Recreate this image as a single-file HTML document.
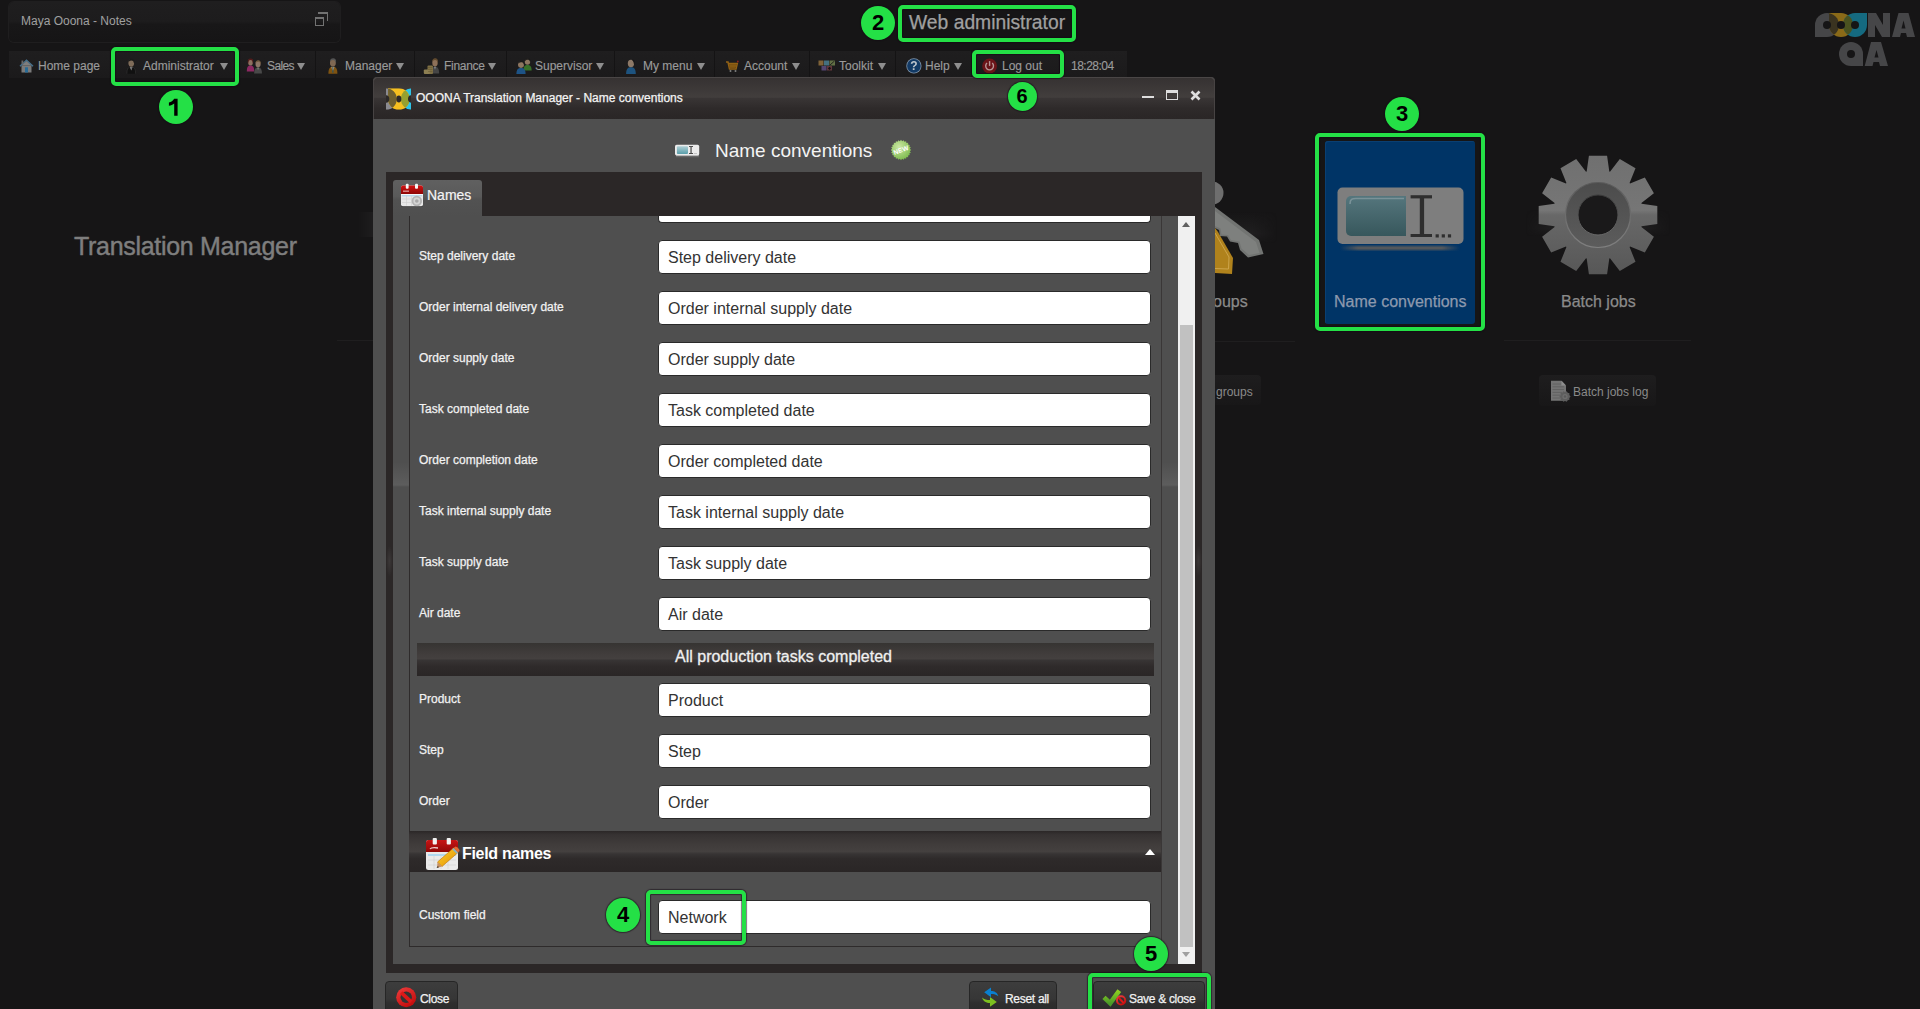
<!DOCTYPE html>
<html><head><meta charset="utf-8">
<style>
*{margin:0;padding:0;box-sizing:border-box}
html,body{width:1920px;height:1009px;overflow:hidden;background:#161516;font-family:"Liberation Sans",sans-serif;position:relative}
.a{position:absolute}
.t{position:absolute;white-space:nowrap;line-height:1}
svg{position:absolute;overflow:visible}
.sep{position:absolute;top:51px;width:1px;height:27px;background:#141314}
.nt{position:absolute;top:60px;font-size:12px;color:#9a9a9a;-webkit-text-stroke:0.15px #9a9a9a;white-space:nowrap;line-height:13px}
.tri{position:absolute;top:63px;width:0;height:0;border-left:4px solid transparent;border-right:4px solid transparent;border-top:7px solid #8e8e8e}
.gbox{position:absolute;border:4px solid #24e046;border-radius:5px;box-shadow:0 0 1px 1px rgba(20,10,20,0.55),inset 0 0 1px 1px rgba(20,10,20,0.55)}
.gc{position:absolute;width:34px;height:34px;border-radius:50%;background:#24e046;color:#000;font-weight:bold;font-size:22px;text-align:center;line-height:34px;box-shadow:0 0 1px 1px rgba(20,10,20,0.55)}
.lbl{position:absolute;font-size:12px;color:#f2f2f2;white-space:nowrap;line-height:13px;-webkit-text-stroke:0.25px #f2f2f2}
.inp{position:absolute;width:493px;height:34px;background:#fff;border-radius:4px;border:1px solid #2a2a2a}
.inp span{position:absolute;left:9px;top:8px;font-size:16px;color:#333;line-height:17px;white-space:nowrap}
.btn{position:absolute;height:40px;background:linear-gradient(#3d3d3d,#363636 45%,#2e2e2e 55%,#282828);border-radius:4px;border:1px solid #262626}
.btn span{position:absolute;top:11px;font-size:12px;color:#f2f2f2;-webkit-text-stroke:0.25px #f2f2f2;white-space:nowrap;line-height:13px;letter-spacing:-0.3px}
</style></head><body>
<div class="a" style="left:9px;top:2px;width:331px;height:40px;background:linear-gradient(#1f1e1f 0%,#1d1c1d 48%,#181718 56%,#161516 100%);border-radius:5px;box-shadow:0 0 0 1px #1f1e1f"></div>
<div class="t" style="left:21px;top:15px;font-size:12px;color:#a0a0a0">Maya Ooona - Notes</div>
<div class="a" style="left:318px;top:12px;width:10px;height:9px;border-top:2px solid #727272;border-right:1.5px solid #727272"></div>
<div class="a" style="left:315px;top:17px;width:9px;height:9px;border:1.5px solid #727272;border-top-width:2.5px"></div>
<div class="a" style="left:9px;top:51px;width:1118px;height:27px;background:linear-gradient(#1f1e1f,#1b1a1b)"></div>
<div class="nt" style="left:38px">Home page</div>
<div class="nt" style="left:143px">Administrator</div>
<div class="tri" style="left:220px"></div>
<div class="nt" style="left:267px;letter-spacing:-0.6px">Sales</div>
<div class="tri" style="left:297px"></div>
<div class="nt" style="left:345px">Manager</div>
<div class="tri" style="left:396px"></div>
<div class="nt" style="left:444px;letter-spacing:-0.3px">Finance</div>
<div class="tri" style="left:488px"></div>
<div class="nt" style="left:535px">Supervisor</div>
<div class="tri" style="left:596px"></div>
<div class="nt" style="left:643px">My menu</div>
<div class="tri" style="left:697px"></div>
<div class="nt" style="left:744px">Account</div>
<div class="tri" style="left:792px"></div>
<div class="nt" style="left:839px">Toolkit</div>
<div class="tri" style="left:878px"></div>
<div class="nt" style="left:925px">Help</div>
<div class="tri" style="left:954px"></div>
<div class="nt" style="left:1002px">Log out</div>
<div class="nt" style="left:1071px;letter-spacing:-0.5px">18:28:04</div>
<div class="sep" style="left:110px"></div>
<div class="sep" style="left:239px"></div>
<div class="sep" style="left:315px"></div>
<div class="sep" style="left:414px"></div>
<div class="sep" style="left:506px"></div>
<div class="sep" style="left:614px"></div>
<div class="sep" style="left:714px"></div>
<div class="sep" style="left:809px"></div>
<div class="sep" style="left:895px"></div>
<div class="sep" style="left:971px"></div>
<div class="sep" style="left:1059px"></div>
<div class="a" style="left:0;top:0;opacity:0.9"><svg style="left:0;top:0" width="1000" height="80" viewBox="0 0 1000 80"><g transform="translate(19,59)"><rect x="2.5" y="6.5" width="10" height="7" fill="#858585"/><path d="M1 7.2 L7.5 1.2 L14 7.2" fill="none" stroke="#4a7a9a" stroke-width="1.5"/><path d="M2.6 6.5 L7.5 2 L12.4 6.5Z" fill="#8a8a8a"/><rect x="2.5" y="1.5" width="1.8" height="3.5" fill="#707070"/><rect x="6" y="8.3" width="3" height="5.2" fill="#2a74a4"/></g><g transform="translate(126.5,58.5) scale(0.95,0.95)"><path d="M0.4 16 C0.4 10.8 2 8.9 5 8.9 C8 8.9 9.6 10.8 9.6 16Z" fill="#101010"/><path d="M3.6 9 L6.4 9 L5 12.5Z" fill="#b8b8b8"/><path d="M4.7 9.6 L5.3 9.6 L5.1 13Z" fill="#333"/><path d="M0.4 16 C0.4 10.8 2 8.9 5 8.9 C8 8.9 9.6 10.8 9.6 16" fill="none" stroke="#3a3a3a" stroke-width="0.6"/><ellipse cx="5" cy="4.8" rx="3" ry="3.9" fill="#8a7560"/><path d="M2.1 4.2 C1.8 1.2 3.5 0.3 5.2 0.3 C7.3 0.3 8.6 1.6 8.2 5 L7.6 4.4 C7.5 2.8 6.6 2.1 5 2.1 C3.6 2.1 2.6 3 2.1 4.2Z" fill="#1a1a1a"/></g><g transform="translate(246.5,58.3) scale(0.8,0.82)"><path d="M0.4 16 C0.4 10.8 2 8.9 5 8.9 C8 8.9 9.6 10.8 9.6 16Z" fill="#9a2a6a"/><ellipse cx="5" cy="4.8" rx="3" ry="3.9" fill="#9a7a68"/><path d="M1.8 6.5 C1 1.5 3 0.2 5 0.2 C7.5 0.2 9 1.5 8.2 6.5 L7.6 5 C7.6 3 6.5 2 5 2 C3.5 2 2.5 3 2.4 5Z" fill="#5a1a1a"/></g><g transform="translate(253.8,60) scale(0.85,0.85)"><path d="M0.4 16 C0.4 10.8 2 8.9 5 8.9 C8 8.9 9.6 10.8 9.6 16Z" fill="#4e4e4e"/><path d="M4 9 L6 9 L5 12Z" fill="#8a9a8a"/><ellipse cx="5" cy="4.8" rx="3" ry="3.9" fill="#9a8070"/><path d="M2.1 4.2 C1.8 1.2 3.5 0.3 5.2 0.3 C7.3 0.3 8.6 1.6 8.2 5 L7.6 4.4 C7.5 2.8 6.6 2.1 5 2.1 C3.6 2.1 2.6 3 2.1 4.2Z" fill="#7a6040"/></g><g transform="translate(328,58) scale(0.98,0.98)"><path d="M0.4 16 C0.4 10.8 2 8.9 5 8.9 C8 8.9 9.6 10.8 9.6 16Z" fill="#8a5a10"/><rect x="4.5" y="9" width="1" height="6" fill="#1a5a7a"/><path d="M3.5 9 L4.4 9 L4.4 13Z M5.6 9 L6.5 9 L5.6 13Z" fill="#c8c8c8"/><ellipse cx="5" cy="4.8" rx="3" ry="3.9" fill="#8a7058"/><path d="M2.1 4.2 C1.8 1.2 3.5 0.3 5.2 0.3 C7.3 0.3 8.6 1.6 8.2 5 L7.6 4.4 C7.5 2.8 6.6 2.1 5 2.1 C3.6 2.1 2.6 3 2.1 4.2Z" fill="#5a5a5a"/></g><g transform="translate(430.5,58) scale(0.9,0.97)"><path d="M0.4 16 C0.4 10.8 2 8.9 5 8.9 C8 8.9 9.6 10.8 9.6 16Z" fill="#4a4a4a"/><path d="M4 9 L6 9 L5 12Z" fill="#9aa0a8"/><ellipse cx="5" cy="4.8" rx="3" ry="3.9" fill="#9a7a60"/><path d="M2.1 4.2 C1.8 1.2 3.5 0.3 5.2 0.3 C7.3 0.3 8.6 1.6 8.2 5 L7.6 4.4 C7.5 2.8 6.6 2.1 5 2.1 C3.6 2.1 2.6 3 2.1 4.2Z" fill="#6a5030"/></g><g transform="translate(423.5,65.5)"><rect x="4" y="0" width="5.5" height="8.5" rx="1" fill="#8a7a4a"/><rect x="0.3" y="4" width="6" height="4.5" rx="1" fill="#9a8a58"/><path d="M4.5 2 H9 M4.5 4 H9 M4.5 6 H9" stroke="#6a5a30" stroke-width="0.5"/></g><g transform="translate(523,58) scale(0.9,0.78)"><path d="M0.4 16 C0.4 10.8 2 8.9 5 8.9 C8 8.9 9.6 10.8 9.6 16Z" fill="#3a7a2a"/><ellipse cx="5" cy="4.8" rx="3" ry="3.9" fill="#9a8068"/><path d="M2.1 4.2 C1.8 1.2 3.5 0.3 5.2 0.3 C7.3 0.3 8.6 1.6 8.2 5 L7.6 4.4 C7.5 2.8 6.6 2.1 5 2.1 C3.6 2.1 2.6 3 2.1 4.2Z" fill="#1a1a1a"/></g><g transform="translate(516,60.5) scale(1.0,0.85)"><path d="M0.4 16 C0.4 10.8 2 8.9 5 8.9 C8 8.9 9.6 10.8 9.6 16Z" fill="#1e5a92"/><ellipse cx="5" cy="4.8" rx="3" ry="3.9" fill="#9a8068"/><path d="M2.1 4.2 C1.8 1.2 3.5 0.3 5.2 0.3 C7.3 0.3 8.6 1.6 8.2 5 L7.6 4.4 C7.5 2.8 6.6 2.1 5 2.1 C3.6 2.1 2.6 3 2.1 4.2Z" fill="#1a1a1a"/></g><g transform="translate(625.7,59) scale(1.05,0.94)"><path d="M0.4 16 C0.4 10.8 2 8.9 5 8.9 C8 8.9 9.6 10.8 9.6 16Z" fill="#1e5a8a"/><ellipse cx="5" cy="4.8" rx="3" ry="3.9" fill="#9a8470"/><path d="M6 1 C7.5 0.3 8.8 1.5 8.4 5.5 L7.7 5 C7.6 3 7 1.8 6 1Z" fill="#141414"/></g><g transform="translate(725.5,60.5)"><path d="M0.5 1.5 H2.5 L4 8.5 H10.5 L11.8 3 H3" fill="none" stroke="#a06a14" stroke-width="1.5"/><path d="M3.3 3.6 H11.2 L10.1 7.8 H4.2Z" fill="#8a5a10"/><path d="M4 5.5 H11" stroke="#a06a14" stroke-width="0.8"/><circle cx="5" cy="10.5" r="1" fill="#8a8a8a"/><circle cx="10" cy="10.5" r="1" fill="#8a8a8a"/><circle cx="12.3" cy="1" r="0.9" fill="#a02020"/></g><g transform="translate(818.5,60.5)"><rect x="0" y="0" width="5" height="5" fill="#8a6a3a"/><rect x="5.5" y="0" width="5" height="5" fill="#4a7a8a"/><rect x="11" y="0" width="5.5" height="5" fill="#6a7a4a"/><path d="M11.5 4.5 L16 0.5" stroke="#1a1a1a" stroke-width="0.9"/><rect x="3" y="5.5" width="5" height="4.5" fill="#5a4a7a"/><rect x="8.5" y="5.5" width="5" height="4.5" fill="#6a3a40"/><path d="M11 6.2 L12.6 7.8 L11 9.4 L9.4 7.8Z" fill="#111"/></g><g transform="translate(906,58)"><circle cx="7.9" cy="7.9" r="7.6" fill="#8aa0b8"/><circle cx="7.9" cy="7.9" r="6.8" fill="#123e6e"/><text x="7.9" y="12.3" text-anchor="middle" font-family="Liberation Sans" font-weight="bold" font-size="12" fill="#d0d8e0">?</text></g><g transform="translate(982,58.5)"><circle cx="7.6" cy="7.4" r="7.4" fill="#741418"/><path d="M5 4.6 A3.9 3.9 0 1 0 10.2 4.6" fill="none" stroke="#c8a4a4" stroke-width="1.4"/><path d="M7.6 2.6 L7.6 7.4" stroke="#c8a4a4" stroke-width="1.4"/></g></svg></div>
<div class="t" style="left:909px;top:13px;font-size:19.3px;color:#a0a0a0;-webkit-text-stroke:0.25px #a0a0a0">Web administrator</div>
<div class="t" style="left:74px;top:234px;font-size:25px;letter-spacing:-0.3px;color:#7e7e7e;-webkit-text-stroke:0.45px #7e7e7e">Translation Manager</div>

<svg style="left:1815px;top:13px" width="101" height="54" viewBox="0 0 101 54">
<defs>
<clipPath id="c1"><path d="M0 12 A12 12 0 0 1 24 12 A12 12 0 0 1 12 24 H0Z"/></clipPath>
<clipPath id="c3"><path d="M40 0 H52 V12 A12 12 0 0 1 40 24 A12 12 0 0 1 40 0Z"/></clipPath>
</defs>
<path d="M0 12 A12 12 0 0 1 24 12 A12 12 0 0 1 12 24 H0Z" fill="#464648"/>
<path d="M14 0 H26 A12 12 0 0 1 26 24 A12 12 0 0 1 14 12Z" fill="#8a6a18"/>
<path d="M40 0 H52 V12 A12 12 0 0 1 40 24 A12 12 0 0 1 40 0Z" fill="#156a80"/>
<path d="M14 0 H26 A12 12 0 0 1 26 24 A12 12 0 0 1 14 12Z" fill="#3a3320" clip-path="url(#c1)"/>
<path d="M14 0 H26 A12 12 0 0 1 26 24 A12 12 0 0 1 14 12Z" fill="#4a5220" clip-path="url(#c3)"/>
<circle cx="12" cy="12" r="4" fill="#161516"/><circle cx="26" cy="12" r="4" fill="#161516"/><circle cx="40" cy="12" r="4" fill="#161516"/>
<path d="M53 0 H61 L68 12 V0 H75 V24 H67 L60 12 V24 H53Z" fill="#464648"/>
<path d="M77 24 L83.5 0 H93.5 L100 24 H92 L91 20 H86 L85 24Z M86.5 15.5 H90.5 L88.5 7.5Z" fill="#464648" fill-rule="evenodd"/>
<path d="M24 41 A12 12 0 0 1 48 41 V53 H36 A12 12 0 0 1 24 41Z" fill="#464648"/>
<circle cx="36" cy="41" r="4" fill="#161516"/>
<path d="M49.7 53 L56 29 H66 L73 53 H65 L64 49 H58.5 L57.5 53Z M59.5 44.5 H63.5 L61.5 37Z" fill="#464648" fill-rule="evenodd"/>
</svg>

<div class="a" style="left:358px;top:212px;width:16px;height:25px;background:linear-gradient(90deg,#161516,#1e1d1e)"></div>
<div class="a" style="left:1215px;top:212px;width:62px;height:31px;background:linear-gradient(rgba(40,39,40,0),rgba(40,39,40,0.55) 70%,rgba(40,39,40,0.2) 90%,rgba(40,39,40,0));-webkit-mask-image:linear-gradient(90deg,#000 60%,transparent)"></div>
<div class="a" style="left:1526px;top:210px;width:144px;height:26px;background:linear-gradient(rgba(40,39,40,0),rgba(40,39,40,0.55) 70%,rgba(40,39,40,0.2) 90%,rgba(40,39,40,0));-webkit-mask-image:linear-gradient(90deg,transparent,#000 20%,#000 80%,transparent)"></div>
<div class="a" style="left:337px;top:340px;width:36px;height:1px;background:#1f1e1f"></div>
<div class="a" style="left:1215px;top:341px;width:80px;height:1px;background:#1f1e1f"></div>
<div class="a" style="left:1504px;top:340px;width:187px;height:1px;background:#1f1e1f"></div>

<svg style="left:1215px;top:170px" width="60" height="110" viewBox="0 0 60 110">
<path d="M0 58 L3 62 L18 88 L17 104 L0 103Z" fill="#b0821c"/>
<path d="M0 63 L14 87 L13.5 99 L0 98.5" fill="none" stroke="#d0a850" stroke-width="0.9"/>
<circle cx="-3" cy="23" r="11.5" fill="#6e6e6e"/>
<path d="M0 37 L44 70 L48.5 84 L33 87.5 L25 80 L23 73 L15 71.5 L12 66.5 L5 66 L4 60 L0 58Z" fill="#727472"/>
<path d="M0 41 L41 72 L44.5 83 L34 85 L26.5 78.5 L24.5 71.5 L16 70 L13 65 L6.5 64.5 L5.5 58.5 L0 56Z" fill="#7e807e"/>
</svg>

<div class="t" style="left:1213px;top:294px;font-size:16px;color:#8a8a8a;-webkit-text-stroke:0.25px #8a8a8a">oups</div>
<div class="a" style="left:1200px;top:375px;width:61px;height:30px;background:linear-gradient(#1e1d1e,#1b1a1b 50%,#181718);border-radius:4px"></div>
<div class="t" style="left:1216px;top:386px;font-size:12px;color:#8a8a8a">groups</div>
<div class="a" style="left:1325px;top:141px;width:150px;height:183px;background:#003466;border-radius:3px;box-shadow:inset 1px 1px 0 #0a3f72"></div>

<svg style="left:1325px;top:175px" width="150" height="80" viewBox="0 0 150 80">
<defs><linearGradient id="tg" x1="0" y1="0" x2="0" y2="1"><stop offset="0" stop-color="#55767d"/><stop offset="1" stop-color="#37575c"/></linearGradient>
<linearGradient id="shl" x1="0" y1="0" x2="1" y2="0"><stop offset="0" stop-color="#5a5a5a" stop-opacity="0"/><stop offset="0.15" stop-color="#5a5a5a"/><stop offset="0.85" stop-color="#5a5a5a"/><stop offset="1" stop-color="#5a5a5a" stop-opacity="0"/></linearGradient></defs>
<filter id="bl"><feGaussianBlur stdDeviation="1"/></filter><rect x="15" y="71" width="120" height="4" fill="url(#shl)" filter="url(#bl)"/>
<rect x="12.5" y="12.5" width="126" height="56.5" rx="5" fill="#7e7e7e"/>
<path d="M26 21 H81 V61 H26 A5 5 0 0 1 21 56 V26 A5 5 0 0 1 26 21Z" fill="url(#tg)"/>
<path d="M25 29 C25 24 27 23.5 31 23.5 H79" stroke="#7a9298" stroke-width="1.6" fill="none"/>
<rect x="85.6" y="20.2" width="21.4" height="3.2" fill="#2e2e2e"/>
<rect x="94.8" y="22" width="4.3" height="40" fill="#2e2e2e"/>
<rect x="85.6" y="59" width="21.4" height="3" fill="#2e2e2e"/>
<rect x="110.6" y="59.3" width="3.2" height="3.2" fill="#2e2e2e"/>
<rect x="116.7" y="59.3" width="3.2" height="3.2" fill="#2e2e2e"/>
<rect x="122.9" y="59.3" width="3.2" height="3.2" fill="#2e2e2e"/>
</svg>

<div class="t" style="left:1334px;top:294px;font-size:16px;color:#8d99ae;-webkit-text-stroke:0.25px #8d99ae">Name conventions</div>
<svg style="left:1538px;top:155px" width="120" height="120" viewBox="0 0 120 120">
<defs><linearGradient id="gg" x1="0" y1="0" x2="0" y2="1"><stop offset="0" stop-color="#707070"/><stop offset="0.46" stop-color="#767676"/><stop offset="0.5" stop-color="#686868"/><stop offset="1" stop-color="#575757"/></linearGradient>
<linearGradient id="rg" x1="0" y1="0" x2="0" y2="1"><stop offset="0" stop-color="#4c4c4c"/><stop offset="1" stop-color="#5c5c5c"/></linearGradient>
<linearGradient id="rs" x1="0" y1="0" x2="0" y2="1"><stop offset="0" stop-color="#5a5a5a"/><stop offset="1" stop-color="#808080"/></linearGradient>
<linearGradient id="hs2" x1="0" y1="0" x2="0" y2="1"><stop offset="0" stop-color="#3a3a3a"/><stop offset="1" stop-color="#6a6a6a"/></linearGradient></defs>
<path d="M48.69,16.44 L50.92,0.69 L69.08,0.69 L71.31,16.44 L71.99,16.63 L81.80,4.10 L97.51,13.17 L91.57,27.93 L92.07,28.43 L106.83,22.49 L115.90,38.20 L103.37,48.01 L103.56,48.69 L119.31,50.92 L119.31,69.08 L103.56,71.31 L103.37,71.99 L115.90,81.80 L106.83,97.51 L92.07,91.57 L91.57,92.07 L97.51,106.83 L81.80,115.90 L71.99,103.37 L71.31,103.56 L69.08,119.31 L50.92,119.31 L48.69,103.56 L48.01,103.37 L38.20,115.90 L22.49,106.83 L28.43,92.07 L27.93,91.57 L13.17,97.51 L4.10,81.80 L16.63,71.99 L16.44,71.31 L0.69,69.08 L0.69,50.92 L16.44,48.69 L16.63,48.01 L4.10,38.20 L13.17,22.49 L27.93,28.43 L28.43,27.93 L22.49,13.17 L38.20,4.10 L48.01,16.63Z" fill="url(#gg)"/>
<circle cx="60" cy="60" r="32.5" fill="url(#rg)" stroke="url(#rs)" stroke-width="1.2"/>
<circle cx="60" cy="60" r="20" fill="#1a191a" stroke="url(#hs2)" stroke-width="1"/>
</svg>
<div class="t" style="left:1561px;top:294px;font-size:16px;color:#8a8a8a;-webkit-text-stroke:0.25px #8a8a8a">Batch jobs</div>
<div class="a" style="left:1539px;top:375px;width:117px;height:31px;background:linear-gradient(#1e1d1e,#1b1a1b 50%,#181718);border-radius:4px"></div>
<svg style="left:1550px;top:380px" width="22" height="23" viewBox="0 0 22 23"><path d="M1 0.8 H11.5 L16 5.5 V20.8 H1Z" fill="#747474"/><path d="M11.5 0.8 L16 5.5 H11.5Z" fill="#8e8e8e"/><g stroke="#606060" stroke-width="0.9"><path d="M2.5 4 H11 M2.5 6.8 H14 M2.5 9.6 H14 M2.5 12.4 H12 M2.5 15.2 H10 M2.5 18 H10"/></g><polygon points="20.60,16.50 19.37,17.92 19.53,19.79 17.70,20.22 16.73,21.83 15.00,21.10 13.27,21.83 12.30,20.22 10.47,19.79 10.63,17.92 9.40,16.50 10.63,15.08 10.47,13.21 12.30,12.78 13.27,11.17 15.00,11.90 16.73,11.17 17.70,12.78 19.53,13.21 19.37,15.08" fill="#5e5e5e"/><circle cx="15" cy="16.5" r="2.6" fill="#6e6e6e"/><circle cx="15" cy="16.5" r="1.2" fill="#5a5a5a"/></svg>
<div class="t" style="left:1573px;top:386px;font-size:12px;color:#8a8a8a">Batch jobs log</div>
<div class="a" style="left:373px;top:77px;width:842px;height:940px;background:#4f4f4f;border-radius:4px 4px 0 0"></div>
<div class="a" style="left:373px;top:77px;width:842px;height:42px;border-radius:5px 5px 0 0;background:linear-gradient(#353131 0%,#423e3d 48%,#393535 51%,#2e2a2a 75%,#2a2626 100%);box-shadow:inset 0 1px 0 #4a4646,inset -1px 0 0 #474343,inset 1px 0 0 #474343"></div>
<svg style="left:386px;top:88px" width="25" height="22" viewBox="0 0 24.3 21">
<defs><clipPath id="lb"><rect x="0" y="0" width="24.3" height="21"/></clipPath><clipPath id="lc1"><path d="M-10.5 10.5 A10.5 10.5 0 0 1 0 0.0 A10.5 10.5 0 0 1 10.5 10.5 A10.5 10.5 0 0 1 0 21.0 H-10.5Z"/></clipPath><clipPath id="lc3"><path d="M25 0.0 H35.5 V10.5 A10.5 10.5 0 0 1 25 21.0 A10.5 10.5 0 0 1 14.5 10.5 A10.5 10.5 0 0 1 25 0.0Z"/></clipPath></defs>
<g clip-path="url(#lb)">
<path d="M-10.5 10.5 A10.5 10.5 0 0 1 0 0.0 A10.5 10.5 0 0 1 10.5 10.5 A10.5 10.5 0 0 1 0 21.0 H-10.5Z" fill="#8a8a90"/>
<path d="M25 0.0 H35.5 V10.5 A10.5 10.5 0 0 1 25 21.0 A10.5 10.5 0 0 1 14.5 10.5 A10.5 10.5 0 0 1 25 0.0Z" fill="#2ec4e8"/>
<path d="M2.0 0.0 H12.5 A10.5 10.5 0 0 1 23.0 10.5 A10.5 10.5 0 0 1 12.5 21.0 A10.5 10.5 0 0 1 2.0 10.5Z" fill="#f6c020"/>
<path d="M2.0 0.0 H12.5 A10.5 10.5 0 0 1 23.0 10.5 A10.5 10.5 0 0 1 12.5 21.0 A10.5 10.5 0 0 1 2.0 10.5Z" fill="#6e6030" clip-path="url(#lc1)"/>
<path d="M2.0 0.0 H12.5 A10.5 10.5 0 0 1 23.0 10.5 A10.5 10.5 0 0 1 12.5 21.0 A10.5 10.5 0 0 1 2.0 10.5Z" fill="#96a030" clip-path="url(#lc3)"/>
<ellipse cx="0" cy="10.5" rx="3.2" ry="3.6" fill="#2c2929"/>
<ellipse cx="12.5" cy="10.5" rx="2.4" ry="3.3" fill="#2c2929"/>
<ellipse cx="25" cy="10.5" rx="3.6" ry="3.6" fill="#2c2929"/>
</g></svg>
<div class="t" style="left:416px;top:92px;font-size:12px;color:#f4f4f4;-webkit-text-stroke:0.25px #f4f4f4">OOONA Translation Manager - Name conventions</div>
<div class="a" style="left:1142px;top:96px;width:12px;height:2px;background:#dedede"></div>
<div class="a" style="left:1166px;top:90px;width:12px;height:10px;border:1.5px solid #dedede;border-top-width:3px"></div>
<svg style="left:1190px;top:90px" width="11" height="11" viewBox="0 0 11 11"><path d="M1.5 1.5 L9.5 9.5 M9.5 1.5 L1.5 9.5" stroke="#dedede" stroke-width="2.6"/></svg>
<svg style="left:675px;top:144px" width="25" height="15" viewBox="0 0 25 15">
<defs><linearGradient id="hg" x1="0" y1="0" x2="0" y2="1"><stop offset="0" stop-color="#b0d0d6"/><stop offset="1" stop-color="#5a9eaa"/></linearGradient>
<linearGradient id="hs" x1="0" y1="0" x2="0" y2="1"><stop offset="0" stop-color="#9a9a9a"/><stop offset="1" stop-color="#4f4f4f" stop-opacity="0"/></linearGradient></defs>
<rect x="1" y="11" width="23" height="3.5" fill="url(#hs)"/>
<rect x="0" y="0.8" width="24.2" height="10.6" rx="1.6" fill="#ececec"/>
<rect x="1.9" y="2.2" width="11.1" height="7.7" rx="1" fill="url(#hg)"/>
<rect x="14" y="2" width="4" height="0.9" fill="#3a3a3a"/><rect x="15.4" y="2.4" width="1.3" height="7" fill="#555"/><rect x="14" y="9" width="4" height="0.9" fill="#3a3a3a"/>
<rect x="18.8" y="9.2" width="3.2" height="0.6" fill="#aaa"/>
</svg>
<div class="t" style="left:715px;top:141px;font-size:19px;color:#f4f4f4">Name conventions</div>
<svg style="left:891px;top:140px" width="20" height="20" viewBox="0 0 20 20"><defs><radialGradient id="ng" cx="0.4" cy="0.35" r="0.7"><stop offset="0" stop-color="#cce8a4"/><stop offset="1" stop-color="#78b848"/></radialGradient></defs><polygon points="20.20,10.00 18.82,11.16 19.85,12.64 18.22,13.41 18.83,15.10 17.06,15.42 17.21,17.21 15.42,17.06 15.10,18.83 13.41,18.22 12.64,19.85 11.16,18.82 10.00,20.20 8.84,18.82 7.36,19.85 6.59,18.22 4.90,18.83 4.58,17.06 2.79,17.21 2.94,15.42 1.17,15.10 1.78,13.41 0.15,12.64 1.18,11.16 -0.20,10.00 1.18,8.84 0.15,7.36 1.78,6.59 1.17,4.90 2.94,4.58 2.79,2.79 4.58,2.94 4.90,1.17 6.59,1.78 7.36,0.15 8.84,1.18 10.00,-0.20 11.16,1.18 12.64,0.15 13.41,1.78 15.10,1.17 15.42,2.94 17.21,2.79 17.06,4.58 18.83,4.90 18.22,6.59 19.85,7.36 18.82,8.84" fill="url(#ng)"/><text x="10" y="12.5" transform="rotate(-20 10 10)" text-anchor="middle" font-family="Liberation Sans" font-weight="bold" font-size="6.6" fill="#ffffff">NEW</text></svg>
<div class="a" style="left:386px;top:172px;width:816px;height:801px;background:#2b2727"></div>
<div class="a" style="left:393px;top:180px;width:89px;height:36px;background:linear-gradient(#606060 0%,#5a5a5a 45%,#525252 55%,#4f4f4f 100%);border-radius:3px 3px 0 0"></div>
<svg style="left:400px;top:183px" width="24" height="25" viewBox="0 0 24 25">
<defs><linearGradient id="rg1" x1="0" y1="0" x2="0" y2="1"><stop offset="0" stop-color="#d01414"/><stop offset="1" stop-color="#8e0606"/></linearGradient></defs>
<rect x="1" y="2.6" width="22" height="20.6" rx="2" fill="#e8e8e8"/>
<path d="M1 4.6 A2 2 0 0 1 3 2.6 H21 A2 2 0 0 1 23 4.6 V11 H1Z" fill="url(#rg1)"/>
<rect x="1" y="11" width="22" height="1" fill="#f4f8fa"/>
<rect x="2" y="12" width="20" height="1.4" fill="#b8d8ec"/>
<g stroke="#cfcfcf" stroke-width="0.6"><path d="M2 16 H22 M2 19.5 H22 M6.5 13 V22.5 M11.5 13 V22.5"/></g>
<rect x="5.8" y="0.8" width="2.8" height="5" rx="1" fill="#f4f8f8"/><rect x="15" y="0.8" width="3" height="5" rx="1" fill="#f4f8f8"/>
<rect x="3" y="7.5" width="6" height="1.4" fill="#e8b0b0" opacity="0.8"/>
<circle cx="16.8" cy="18" r="5.2" fill="#b4b4b4"/><circle cx="16.8" cy="18" r="3.4" fill="#d4d4d4"/><circle cx="16.8" cy="18" r="1.8" fill="#a8a8a8"/>
<rect x="1" y="23" width="22" height="1" fill="#3a3a3a" opacity="0.4"/>
</svg>
<div class="t" style="left:427px;top:188px;font-size:14px;color:#f4f4f4;-webkit-text-stroke:0.2px #f4f4f4">Names</div>
<div class="a" style="left:393px;top:216px;width:802px;height:748px;background:#4f4f4f"></div>
<div class="a" style="left:409px;top:216px;width:1px;height:731px;background:#2e2b2b"></div>
<div class="a" style="left:1161px;top:216px;width:1px;height:731px;background:#3a3737"></div>
<div class="inp" style="left:658px;top:216px;height:7px;border-radius:0 0 4px 4px;border-top:none"></div>
<div class="lbl" style="left:419px;top:250px">Step delivery date</div>
<div class="inp" style="left:658px;top:240px"><span>Step delivery date</span></div>
<div class="lbl" style="left:419px;top:301px">Order internal delivery date</div>
<div class="inp" style="left:658px;top:291px"><span>Order internal supply date</span></div>
<div class="lbl" style="left:419px;top:352px">Order supply date</div>
<div class="inp" style="left:658px;top:342px"><span>Order supply date</span></div>
<div class="lbl" style="left:419px;top:403px">Task completed date</div>
<div class="inp" style="left:658px;top:393px"><span>Task completed date</span></div>
<div class="lbl" style="left:419px;top:454px">Order completion date</div>
<div class="inp" style="left:658px;top:444px"><span>Order completed date</span></div>
<div class="lbl" style="left:419px;top:505px">Task internal supply date</div>
<div class="inp" style="left:658px;top:495px"><span>Task internal supply date</span></div>
<div class="lbl" style="left:419px;top:556px">Task supply date</div>
<div class="inp" style="left:658px;top:546px"><span>Task supply date</span></div>
<div class="lbl" style="left:419px;top:607px">Air date</div>
<div class="inp" style="left:658px;top:597px"><span>Air date</span></div>
<div class="a" style="left:417px;top:643px;width:737px;height:33px;background:linear-gradient(#363432 0%,#403c3b 30%,#44403f 47%,#373434 53%,#2f2b2b 70%,#2a2626 100%)"></div>
<div class="t" style="left:675px;top:649px;font-size:16px;color:#f0f0f0;-webkit-text-stroke:0.3px #f0f0f0">All production tasks completed</div>
<div class="lbl" style="left:419px;top:693px">Product</div>
<div class="inp" style="left:658px;top:683px"><span>Product</span></div>
<div class="lbl" style="left:419px;top:744px">Step</div>
<div class="inp" style="left:658px;top:734px"><span>Step</span></div>
<div class="lbl" style="left:419px;top:795px">Order</div>
<div class="inp" style="left:658px;top:785px"><span>Order</span></div>
<div class="a" style="left:409px;top:831px;width:752px;height:41px;background:linear-gradient(#2b2727 0%,#363232 9%,#403c3b 33%,#44403f 50%,#373434 56%,#2e2a2a 68%,#2a2626 100%)"></div>
<svg style="left:426px;top:837px" width="33" height="34" viewBox="0 0 33 34">
<defs><linearGradient id="rg2" x1="0" y1="0" x2="0" y2="1"><stop offset="0" stop-color="#c81414"/><stop offset="1" stop-color="#900808"/></linearGradient>
<linearGradient id="pg" x1="0" y1="0" x2="1" y2="1"><stop offset="0" stop-color="#ffd030"/><stop offset="1" stop-color="#e09000"/></linearGradient></defs>
<rect x="0" y="3" width="32" height="30" rx="2.5" fill="#eaeaea"/>
<path d="M0 5.5 A2.5 2.5 0 0 1 2.5 3 H29.5 A2.5 2.5 0 0 1 32 5.5 V15 H0Z" fill="url(#rg2)"/>
<rect x="2" y="17" width="28" height="2" fill="#b0d8f0"/>
<g stroke="#d0d0d0" stroke-width="0.6"><path d="M2 23 H30 M2 28 H30 M8 19 V32 M15 19 V32 M22 19 V32"/></g>
<rect x="6.7" y="1" width="4.2" height="6.5" rx="1" fill="#f2f2f2"/><rect x="20.7" y="1" width="4.2" height="6.5" rx="1" fill="#f2f2f2"/>
<path d="M4 12 C5 10.5 8 10.5 12 11" stroke="#f0d0d0" stroke-width="1.3" fill="none"/>
<path d="M27.5 11 L32 15.5 L16 29.5 L11.5 25Z" fill="url(#pg)" stroke="#c07000" stroke-width="0.6"/>
<path d="M27.5 11 L32 15.5 L33.5 14 C34 12.5 31 9.5 29.5 9.5Z" fill="#e06a30"/>
<path d="M27.5 11 L32 15.5 L30.6 16.8 L26.1 12.3Z" fill="#8ab0c0"/>
<path d="M11.5 25 L16 29.5 L11 31 Z" fill="#c89060"/><path d="M11.9 29.1 L13 30.2 L10.5 31Z" fill="#333"/>
</svg>
<div class="t" style="left:462px;top:846px;font-size:16px;letter-spacing:-0.3px;color:#fff;font-weight:bold">Field names</div>
<div class="a" style="left:1145px;top:849px;width:0;height:0;border-left:5px solid transparent;border-right:5px solid transparent;border-bottom:6px solid #fff"></div>
<div class="a" style="left:409px;top:946px;width:752px;height:1px;background:#2e2b2b"></div>
<div class="lbl" style="left:419px;top:909px">Custom field</div>
<div class="inp" style="left:658px;top:900px"><span>Network</span></div>
<div class="a" style="left:393px;top:462px;width:16px;height:25px;background:linear-gradient(rgba(255,255,255,0),rgba(255,255,255,0.08) 92%,rgba(255,255,255,0) 100%)"></div>
<div class="a" style="left:1162px;top:462px;width:16px;height:25px;background:linear-gradient(rgba(255,255,255,0),rgba(255,255,255,0.08) 92%,rgba(255,255,255,0) 100%)"></div>
<div class="a" style="left:386px;top:545px;width:7px;height:32px;background:radial-gradient(ellipse at center,rgba(255,255,255,0.08),rgba(255,255,255,0) 70%)"></div>
<div class="a" style="left:1195px;top:545px;width:7px;height:32px;background:radial-gradient(ellipse at center,rgba(255,255,255,0.08),rgba(255,255,255,0) 70%)"></div>
<div class="a" style="left:1178px;top:216px;width:17px;height:748px;background:#f0f0f0"></div>
<div class="a" style="left:1180px;top:325px;width:13px;height:622px;background:#c1c1c1"></div>
<div class="a" style="left:1182px;top:222px;width:0;height:0;border-left:4px solid transparent;border-right:4px solid transparent;border-bottom:5px solid #606060"></div>
<div class="a" style="left:1182px;top:952px;width:0;height:0;border-left:4px solid transparent;border-right:4px solid transparent;border-top:5px solid #a0a0a0"></div>
<div class="btn" style="left:385px;top:981px;width:73px"><span style="left:34px">Close</span></div>
<svg style="left:396px;top:987px" width="21" height="21" viewBox="0 0 21 21"><defs><linearGradient id="cg" x1="0.2" y1="0" x2="0.8" y2="1"><stop offset="0" stop-color="#ec3a3a"/><stop offset="1" stop-color="#c00808"/></linearGradient></defs><circle cx="10.2" cy="10.2" r="10" fill="url(#cg)"/><circle cx="10.2" cy="10.2" r="5.7" fill="#333"/><path d="M5.2 5.6 L15.2 14.8" stroke="#dc1818" stroke-width="3.8"/></svg>
<div class="btn" style="left:969px;top:981px;width:88px"><span style="left:35px">Reset all</span></div>
<svg style="left:981px;top:987px" width="19" height="21" viewBox="0 0 17 20"><path d="M16 8.8 C15 5 12 3.8 9 3.8 V0.5 L2.5 5 L9 9.8 V6.6 C12 6.6 14 7 16 8.8Z" fill="#0a80d0"/><path d="M0.5 10 C1.5 14 4.5 15.2 8 15.2 V18.8 L14.5 14.2 L8 9.5 V12.4 C5 12.4 2.5 12 0.5 10Z" fill="#7cc020"/></svg>
<div class="btn" style="left:1093px;top:981px;width:112px"><span style="left:35px">Save &amp; close</span></div>
<svg style="left:1100px;top:987px" width="28" height="21" viewBox="0 0 28 21"><defs><linearGradient id="kg" x1="0" y1="0" x2="0" y2="1"><stop offset="0" stop-color="#90d020"/><stop offset="1" stop-color="#4a9a28"/></linearGradient><linearGradient id="cg2" x1="0.2" y1="0" x2="0.8" y2="1"><stop offset="0" stop-color="#ee4040"/><stop offset="1" stop-color="#c00808"/></linearGradient></defs><path d="M4 10.3 L10.2 16.2 L19.3 3.6" fill="none" stroke="url(#kg)" stroke-width="4.6" stroke-linejoin="miter"/><circle cx="21.1" cy="13.4" r="5.1" fill="url(#cg2)"/><circle cx="21.1" cy="13.4" r="3.1" fill="#333"/><path d="M18.6 10.8 L23.6 16" stroke="#dc1818" stroke-width="2"/></svg>
<div class="gbox" style="left:111px;top:47px;width:128px;height:39px"></div>
<div class="gc" style="left:159px;top:90px"><svg style="left:0;top:0" width="34" height="34" viewBox="0 0 34 34"><path d="M15.2 8.8 H18.6 V25.8 H15.2 V13.6 C13.8 14.7 11.9 15.5 9.9 15.8 V12.6 C12.1 12.1 14.1 10.8 15.2 8.8Z" fill="#000"/></svg></div>
<div class="gbox" style="left:898px;top:5px;width:178px;height:37px"></div>
<div class="gc" style="left:861px;top:6px">2</div>
<div class="gbox" style="left:1315px;top:133px;width:170px;height:198px"></div>
<div class="gc" style="left:1385px;top:97px">3</div>
<div class="gbox" style="left:646px;top:890px;width:100px;height:55px"></div>
<div class="gc" style="left:606px;top:898px">4</div>
<div class="gbox" style="left:1088px;top:973px;width:123px;height:50px"></div>
<div class="gc" style="left:1134px;top:937px">5</div>
<div class="gbox" style="left:972px;top:50px;width:92px;height:28px"></div>
<div class="gc" style="left:1007.5px;top:81.5px;width:29px;height:29px;line-height:29px;font-size:20px">6</div>
</body></html>
